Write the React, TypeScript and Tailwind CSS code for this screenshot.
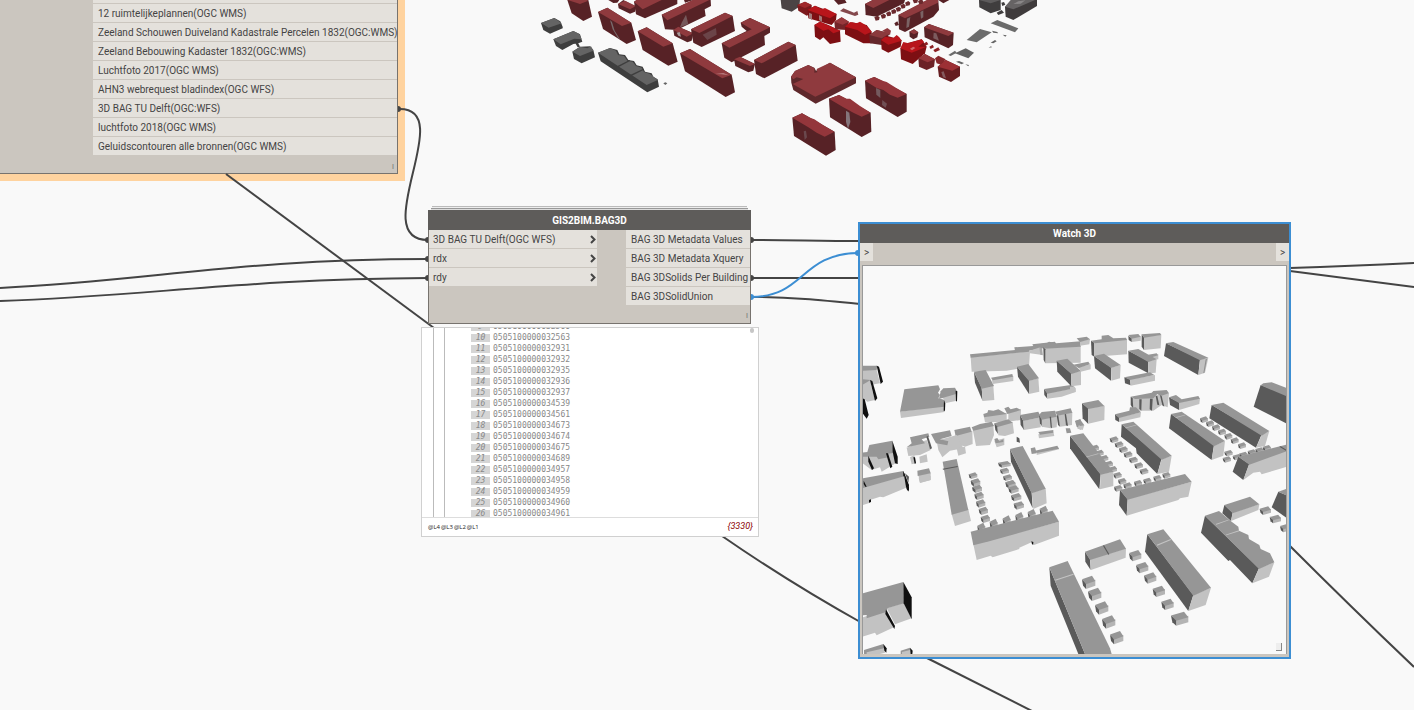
import React from "react";

type Shape = [string, string];
type Cube = [number, number, number, number];

const T = "#969696";
const L = "#c2c2c2";
const D = "#5a5a5a";
const K = "#101010";
const RT = "#8f3a3e";
const RD = "#572226";
const BT = "#b8151b";
const BD = "#7d0f13";
const GT = "#646464";
const GD = "#3e3e3e";

function Shapes({ x, y, items, cubes = [] }: { x: number; y: number; items: Shape[]; cubes?: Cube[] }) {
  return (
    <g transform={`translate(${x} ${y}) scale(0.33333)`}>
      {cubes.map(([cx, cy, w, h], i) => (
        <g key={`c${i}`}>
          <polygon fill="#b4b4b4" points={`${cx + w * 0.3},${cy + h * 0.5} ${cx + w},${cy + h * 0.3} ${cx + w},${cy + h * 0.75} ${cx + w * 0.3},${cy + h}`} />
          <polygon fill={D} points={`${cx},${cy + h * 0.3} ${cx + w * 0.3},${cy + h * 0.5} ${cx + w * 0.3},${cy + h} ${cx + w * 0.08},${cy + h * 0.75}`} />
          <polygon fill={T} points={`${cx},${cy + h * 0.27} ${cx + w * 0.75},${cy} ${cx + w},${cy + h * 0.4} ${cx + w * 0.3},${cy + h * 0.65}`} />
        </g>
      ))}
      {items.map(([fill, points], i) => (
        <polygon key={i} fill={fill} points={points} />
      ))}
    </g>
  );
}

const row = (pts: [number, number][], w: number, h: number): Cube[] => pts.map(([a, b]) => [a, b, w, h]);

const redWest: Shape[] = [
  [GD, "33,69 73,54 91,64 98,80 98,85 60,101 40,90"], [GT, "33,69 73,54 95,70 56,83"],
  [GD, "70,118 130,93 150,103 157,125 145,130 130,132 97,150 78,138"], [GT, "70,118 130,93 148,102 155,118 133,116 92,133"],
  [GD, "136,130 144,128 150,140 143,142"],
  [GD, "127,155 150,140 180,139 190,150 195,172 155,190 132,177"], [GT, "127,155 150,140 172,145 183,139 190,152 150,168"],
  [GD, "204,158 240,144 262,150 268,163 285,165 295,180 312,183 320,196 338,200 345,215 365,220 370,230 383,238 387,260 352,277 212,184"],
  [GT, "204,158 240,144 258,152 264,165 282,168 292,182 308,185 318,198 335,203 342,216 360,222 383,240 350,255"],
  [GD, "252,203 298,180 300,183 255,207"], [GD, "300,225 340,206 342,209 303,229"],
  [GT, "400,250 406,247 412,250 406,255"],
  [RD, "112,0 175,0 186,50 160,63 125,40"], [RT, "113,0 172,0 173,3 150,12"],
  [RD, "204,36 232,23 304,68 318,120 290,132 219,87"], [RT, "204,36 232,23 304,68 276,78"],
  ["#77696b", "240,60 246,66 254,92 270,118 264,114 248,88"],
  [RD, "323,94 350,82 428,130 443,185 415,197 338,150"], [RT, "323,94 350,82 428,130 400,140"],
  [RD, "450,160 480,147 605,224 615,277 587,291 465,214"], [RT, "450,160 480,147 605,224 577,235"],
  ["#b97f80", "555,222 580,219 597,226 575,223"],
  [RD, "235,0 268,0 262,8 250,9"], [RD, "264,12 280,0 318,20 315,35 300,41 266,25"], [RT, "264,12 285,2 318,18 300,28"],
  [RD, "312,5 320,0 442,0 442,12 345,55 318,43"], [RT, "312,5 320,0 395,0 338,28"],
  [RD, "462,0 490,0 465,8"],
  [RD, "395,44 490,0 542,0 543,18 524,28 527,48 440,90 405,88"], [RT, "395,44 488,0 538,0 412,61"],
  ["#76585b", "455,68 468,44 475,72 450,82"],
  [RD, "430,90 445,80 490,100 485,122 472,127 433,107"], [RT, "430,90 445,80 490,100 470,110"],
  ["#a49899", "440,98 449,96 453,110 445,107"],
  [RD, "483,88 585,38 608,48 615,93 515,141 490,128"], [RT, "483,88 585,38 608,48 508,99"],
  ["#6b4448", "518,104 558,84 560,104 532,120"],
  [RD, "632,68 660,54 720,82 720,98 703,108 705,135 605,187 583,173 575,130 650,93 635,80"],
  [RT, "632,68 660,54 720,82 598,143 575,130 665,88"],
  [RD, "612,178 630,170 675,192 670,212 655,217 616,198"], [RT, "612,178 630,170 675,192 660,198"],
  [RD, "672,180 775,125 797,135 803,182 703,235 678,222"], [RT, "672,180 775,125 797,135 695,190"],
  ["#4b4445", "752,0 810,0 808,20 785,35 755,25"],
];

const redEast: Shape[] = [
  ["#7c1a1d", "52,15 75,5 95,15 95,40 80,47 55,32"], ["#a0282b", "52,15 75,5 95,15 75,24"],
  [BD, "83,30 105,17 170,42 168,60 155,75 85,55"], [BT, "83,30 105,17 125,28 135,24 170,42 150,55"],
  ["#a3797a", "87,38 96,42 96,60 87,55"], ["#a3797a", "117,46 126,50 126,66 117,60"],
  [BD, "103,75 120,65 145,75 180,92 182,125 150,132 130,112 120,120 105,110"], [BT, "103,75 120,65 182,92 160,100 145,88 130,92"],
  ["#742529", "163,65 185,52 207,65 200,90 165,88"], ["#98383c", "163,65 185,52 207,65 188,74"],
  [BD, "195,80 215,67 260,75 275,95 275,130 250,130 195,103"], [BT, "195,80 210,66 230,70 240,65 258,76 275,95 255,104 232,90"],
  ["#65282c", "268,105 290,90 330,100 305,135 270,130"], ["#8b3a3d", "268,105 290,90 330,100 305,115"], [RT, "307,92 322,84 333,92 330,105"],
  [BD, "303,120 320,107 365,120 362,140 325,158 305,148"], [BT, "303,120 315,110 340,114 350,105 358,112 365,122 325,134"],
  [BD, "361,145 380,130 425,118 440,140 435,160 398,192 363,178"], [BT, "361,145 370,126 385,130 425,118 432,126 415,140 440,140 395,158"],
  ["#d06a6c", "390,146 400,140 406,144 396,151"],
  ["#8c2023", "432,130 440,125 445,133 435,138"], ["#8c2023", "448,140 458,134 462,142 452,147"], ["#8c2023", "460,150 475,142 480,150 465,157"],
  ["#6c2226", "415,175 435,162 465,178 462,200 440,210 417,200"], ["#97383c", "415,175 435,162 465,178 443,187"],
  ["#86282c", "465,175 475,167 497,178 485,195 470,190"],
  ["#651c20", "473,200 497,180 540,200 540,228 513,246 477,230"], ["#9c3035", "473,200 497,180 540,200 517,212"],
  ["#84595d", "484,216 491,214 498,235 489,232"],
  [RD, "388,95 402,88 415,97 412,112 400,118 389,110"], [RT, "388,95 402,88 415,97 402,103"],
  [RD, "432,82 447,72 521,98 519,135 505,145 434,112"], [RT, "432,82 447,72 521,98 505,108"],
  ["#7c5b5e", "461,98 469,100 477,122 460,115"],
  [RD, "355,45 445,0 475,0 477,30 460,50 375,96 357,88"], [RT, "355,45 440,0 474,0 474,8 375,55"],
  ["#7a6264", "381,56 391,51 387,80 379,84"], ["#7a6264", "421,36 430,31 430,52 423,56"],
  [RD, "255,12 278,0 375,0 372,10 290,50 257,45"], [RT, "255,12 278,0 328,0 280,24"],
  [RD, "162,0 195,0 200,8 175,14"], ["#84494d", "180,33 190,25 222,38 232,33 235,44 225,48"],
  [RD, "343,70 352,64 357,75 347,78"], [RD, "475,0 508,0 490,10"],
  ...([[283, 52], [302, 46], [318, 39], [333, 32], [347, 25], [361, 16], [375, 8], [398, 0], [414, 3]] as [number, number][]).map(
    ([a, b]): Shape => ["#6b292d", `${a},${b} ${a + 10},${b - 5} ${a + 16},${b} ${a + 14},${b + 8} ${a + 4},${b + 10}`]
  ),
  ["#3f3d3e", "597,0 662,0 662,30 632,40 598,22"], ["#5d5b5c", "597,0 662,0 632,10"], ["#3f3d3e", "650,38 665,30 672,38 655,45"], ["#3f3d3e", "664,8 672,6 676,14 667,18"],
  ["#3f3b3c", "675,20 700,0 771,0 771,18 700,60 677,50"], ["#666364", "675,20 692,0 765,0 700,28"], ["#8a8788", "700,12 715,4 736,1 722,11"],
  ["#6b6b6b", "632,70 652,60 715,85 705,97"], ["#6b6b6b", "560,120 600,87 635,97 590,127"], ["#626262", "525,160 557,145 582,158 565,175"],
  ["#6b6b6b", "505,165 525,152 530,158 512,168"], [GT, "636,92 652,96 654,100 640,98"], [GT, "668,104 680,106 676,110"],
  [GT, "632,128 645,120 650,124 640,130"], [GT, "626,143 633,139 636,142"], [GT, "528,185 537,183 552,189 545,193"], [GT, "556,193 567,195 565,199"],
  ["#5e282b", "33,230 45,213 85,195 103,203 108,212 150,188 228,232 228,250 107,311 40,270 34,248"],
  [RT, "33,230 45,213 85,195 103,205 103,218 112,217 110,207 150,188 228,232 106,290 38,252 70,237 50,232 40,238"],
  [RD, "255,242 283,231 380,282 380,335 353,351 258,295"], ["#94363b", "255,242 272,235 283,231 310,243 320,246 345,262 380,282 353,293 330,284 310,270 290,264"],
  ["#745a5e", "288,264 301,270 301,294 289,284"], ["#704f54", "307,300 321,311 317,323 306,315"],
  [RD, "147,296 177,285 272,338 274,395 245,411 150,352"], ["#94363b", "147,296 177,285 200,296 210,296 240,318 272,338 245,350 220,338 190,322"],
  ["#84747a", "198,332 208,338 211,366 204,386 198,366"],
  [RD, "37,353 66,340 164,395 167,450 138,467 42,408"], ["#94363b", "37,353 66,340 92,354 103,358 130,376 163,395 134,410 110,398 85,382"],
  ["#6a484d", "71,394 78,392 81,412 74,420"],
];

const northWest: Shape[] = [
  [L, "8,150 50,150 60,190 30,195 8,190"], [T, "8,137 52,137 50,150 8,152"], [K, "50,137 57,140 69,185 62,192"],
  [L, "8,185 30,185 45,240 22,245 8,235"], [T, "8,178 32,180 8,194"], [K, "30,180 37,183 52,235 45,243"], [K, "8,235 14,238 26,285 20,296 8,280"],
  [L, "120,275 254,256 254,276 123,294"], [T, "133,208 235,196 240,208 234,218 240,225 235,235 255,240 252,260 120,275"], [K, "252,240 256,245 255,272 251,272"],
  [L, "240,228 290,218 290,242 255,250 252,238"], [T, "242,214 250,205 285,203 290,212 288,222 237,237"], [K, "287,212 292,214 291,245 288,242"],
  [L, "332,112 510,94 507,140 440,152 335,155"], [T, "463,82 520,78 517,73 585,65 590,76 500,94 465,92"], [T, "330,103 505,86 508,95 332,113"],
  [L, "507,93 545,80 548,105 510,100"], ["#a8a8a8", "538,82 546,80 548,106 541,104"],
  [L, "554,85 662,78 662,128 556,130"], [T, "517,75 560,70 567,65 585,68 588,70 662,64 662,80 552,86"], [D, "550,82 556,88 556,130 551,120"],
  [D, "342,155 365,203 368,243 345,188"], [L, "365,203 400,197 403,240 368,243"], [T, "342,155 377,150 402,198 365,206"],
  [L, "396,179 460,168 460,183 398,192"], [T, "393,173 457,162 459,170 398,181"],
  [D, "471,140 507,180 507,222 474,170"], [L, "507,182 535,175 538,215 507,222"], [T, "471,140 505,132 537,175 507,183"],
  [D, "552,207 562,219 562,236 553,225"], [L, "562,219 647,204 647,216 605,230 562,236"], [T, "552,207 637,194 645,205 562,221"],
  [L, "372,290 440,278 440,305 375,307"], [T, "370,282 382,278 385,270 400,272 415,268 440,282 372,292"],
  [L, "445,275 483,268 482,300 445,305"], [T, "433,265 445,260 452,268 470,263 483,270 442,282"],
  [L, "412,318 458,306 462,340 435,348 415,346"], [T, "403,310 445,298 458,308 410,322"], [D, "403,310 412,320 414,342 406,330"],
  [D, "480,285 490,302 492,330 482,315"], [L, "490,302 543,292 542,322 492,330"], [T, "480,285 535,275 543,292 490,303"],
  [D, "537,285 546,297 548,322 540,310"], [L, "545,297 592,288 590,322 572,325 545,320"], [T, "537,285 545,276 585,272 590,290 545,299"], [D, "569,290 573,290 576,325 572,322"],
  [L, "592,285 637,276 636,315 600,320"], [T, "585,275 632,265 637,278 592,287"], [D, "590,285 595,287 600,320 594,315"], [D, "614,283 618,282 624,318 618,316"],
  [L, "535,343 580,335 583,348 537,355"], [T, "535,336 580,330 580,338 540,344"], [T, "617,325 630,325 634,338 620,340"],
  [L, "403,362 433,355 433,375 410,382"], [T, "403,357 412,354 418,364 430,358 430,366 407,370"], [D, "470,350 478,355 480,368 470,365"],
  [T, "512,385 525,382 530,400 515,402"], [L, "530,396 597,383 597,388 530,405"], [T, "525,392 592,377 597,386 530,399"],
  [L, "338,328 400,315 402,345 390,375 348,378"], [T, "335,322 360,312 395,305 402,318 340,332"],
  [L, "287,342 337,333 338,372 315,380 287,370"], [T, "283,330 330,320 335,335 287,348"],
  [L, "230,362 290,345 310,385 270,392 247,412 235,390"], [T, "213,342 270,331 275,348 240,358 265,364 262,376 228,370"], [L, "290,385 315,380 318,400 295,407"],
  [L, "140,383 200,360 212,390 180,405 145,408"], [T, "150,352 205,340 208,350 185,358 195,370 140,382 155,370"], [D, "199,350 204,348 216,385 210,388"],
  [L, "150,412 163,405 168,430 155,433"], [K, "160,412 165,412 168,430 164,431"], [L, "178,410 200,403 203,425 180,430"],
  [L, "175,465 212,458 212,480 180,488"], [T, "172,452 207,445 212,460 173,468"],
  [L, "8,405 40,402 100,400 107,430 65,455 60,442 35,450 8,430"], [T, "28,375 97,362 100,400 80,402 85,412 55,418 50,410 8,410 8,398 22,396"],
  [K, "97,362 113,410 113,432 105,430 98,395"], [K, "25,407 42,445 36,450 25,425"], [K, "78,400 84,400 97,440 91,445"],
  [T, "8,475 130,453 140,480 20,504 8,507"], [K, "130,453 147,500 147,512 141,510 130,472"], [D, "135,460 147,470 145,488"],
  [T, "645,303 662,298 662,330 650,320"],
  [D, "590,122 634,160 634,199 592,155"], [L, "634,160 663,152 663,195 634,199"], [T, "590,122 622,116 663,153 634,162"],
];
const northWestCubes: Cube[] = [
  ...row([[326, 457], [332, 477], [336, 496]], 26, 20),
  [414, 423, 38, 20], ...row([[420, 443], [429, 463], [437, 481]], 27, 20),
];

const northEast: Shape[] = [
  [L, "30,63 60,57 58,73 30,77"], [T, "20,55 50,50 60,58 30,66"],
  [D, "63,62 73,68 73,110 65,105"], [L, "73,67 171,58 171,103 73,110"], [T, "63,62 95,58 95,47 115,45 130,55 168,53 171,60 75,70"],
  [L, "185,53 213,49 212,62 185,66"], [D, "175,47 185,55 185,66 176,60"], [T, "175,45 205,42 212,50 185,56"],
  [D, "215,43 222,52 222,90 215,80"], [L, "222,50 274,44 272,85 222,90"], [T, "215,43 270,39 274,45 222,53"],
  [D, "72,108 123,142 123,182 75,145"], [L, "123,143 152,135 150,175 124,182"], [T, "72,108 102,101 152,135 123,144"],
  [L, "235,105 265,103 265,118 245,120"], [T, "235,104 260,100 264,106 245,112"],
  [D, "175,92 235,123 235,160 176,128"], [L, "235,124 260,118 257,158 238,160"], [T, "175,92 205,87 260,118 235,126"],
  [D, "163,172 180,178 182,196 165,190"], [L, "180,178 255,165 255,182 182,197"], [T, "163,172 240,157 253,165 180,180"],
  [D, "288,70 390,118 385,165 282,108"], [L, "390,119 415,113 405,158 385,165"], [T, "287,70 310,66 415,113 390,121"], ["#8e8e8e", "407,118 411,116 403,158 400,160"],
  [L, "26,142 62,133 62,148 32,155"], [T, "10,134 55,125 60,133 26,144"], [L, "0,200 15,200 17,215 0,220"],
  [D, "572,195 652,225 652,312 551,260"], [T, "572,196 580,190 605,187 652,205 652,230"],
  [D, "36,250 55,265 55,312 38,295"], [L, "55,265 104,257 103,300 55,311"], [T, "36,250 85,240 103,258 55,267"],
  [L, "28,312 43,316 38,330 22,326"], [T, "15,303 30,298 43,316 30,318"],
  [L, "185,235 297,220 293,262 275,255 250,272 210,272 190,265"], [T, "182,230 245,218 250,213 290,210 297,220 272,228 262,222 250,235 195,237"],
  [D, "182,230 188,234 190,268 182,255"], [D, "208,238 215,238 214,272 208,266"], [D, "240,236 248,236 246,272 239,268"], [D, "257,228 262,228 268,256 262,254"], [D, "270,226 275,228 283,260 277,256"],
  [D, "135,283 147,292 147,306 136,300"], [L, "147,292 213,277 211,292 147,306"], [T, "135,283 178,272 180,262 198,262 213,277 147,294"],
  [D, "297,232 327,247 327,270 300,255"], [L, "327,247 390,235 388,252 327,270"], [T, "297,232 318,225 335,238 385,228 390,236 327,249"],
  [D, "425,255 575,343 558,383 418,295"], [L, "575,345 598,333 585,378 558,383"], [T, "425,255 460,248 598,333 575,347"],
  [D, "303,282 432,375 425,420 297,325"], [L, "432,377 465,363 460,407 425,420"], [T, "303,282 335,275 465,363 432,379"], ["#bcbcbc", "316,292 345,284 346,286 318,294"],
  [D, "155,313 275,415 262,462 200,400 198,385 153,350"], [L, "275,417 305,407 297,455 262,462"], [T, "155,313 190,305 305,407 275,419"], ["#bcbcbc", "165,323 198,314 200,316 167,325"],
  [D, "0,347 92,462 88,508 0,385"], [L, "92,462 130,455 130,498 90,508"], [T, "0,347 40,340 130,455 92,464"], ["#bcbcbc", "48,410 85,400 86,402 50,412"],
  [D, "505,410 538,432 520,480 488,455"], [L, "538,430 652,391 652,440 575,463 570,455 550,458 520,480"], [T, "505,410 652,373 652,393 538,434"], [D, "628,380 632,379 650,390 648,392"],
];
const northEastCubes: Cube[] = [
  ...row([[390, 289], [408, 301], [426, 313], [444, 326], [463, 339], [482, 352], [504, 367]], 24, 20),
  ...row([[119, 349], [134, 364], [147, 379], [161, 394], [177, 410], [193, 427], [209, 444]], 26, 20),
  ...row([[62, 374], [76, 389], [90, 405], [104, 422], [116, 438], [130, 456], [144, 474], [160, 487], [132, 495]], 25, 20),
  ...row([[463, 390], [458, 409], [488, 402], [508, 395], [533, 388], [556, 382], [578, 375]], 25, 19),
  ...row([[192, 480], [220, 473], [250, 465], [277, 456]], 24, 20),
];

const southWest: Shape[] = [
  [L, "8,24 135,-12 146,20 70,52 60,50 30,60 30,68 8,75"], [K, "130,-27 147,15 145,35 138,20"], [K, "27,60 33,58 33,66 27,68"], [K, "11,2 20,20 16,20 11,12"],
  [L, "176,-5 212,-12 212,0 180,9"],
  [L, "275,102 325,88 333,123 285,138"], [T, "248,-55 290,-63 325,90 275,104"], [D, "248,-34 293,-42 293,-39 249,-31"],
  [D, "450,-93 515,38 518,85 453,-55"], [L, "515,38 557,25 560,70 520,87"], [T, "450,-93 488,-102 557,26 515,40"],
  [L, "340,193 597,125 597,167 522,195 518,185 478,203 478,207 398,232 392,227 350,240"], [T, "332,155 578,92 597,125 388,184 340,196"], [K, "514,184 520,186 520,194 516,193"],
  [L, "8,412 75,390 105,440 50,466 45,458 8,470"], [L, "80,385 132,368 155,415 105,433"], [T, "8,340 130,306 132,370 82,385 78,396 20,415 20,405 8,406"],
  [K, "130,306 155,352 155,418 131,370"], [K, "78,388 105,438 103,447 76,402"],
  [T, "12,510 70,492 76,505 20,522 12,522"], [L, "20,517 72,505 75,518 60,522 20,522"], [K, "70,492 80,505 79,518 73,512"],
  [T, "122,512 150,503 152,522 122,522"], [L, "126,516 150,510 152,522 126,522"], [K, "150,503 158,512 157,522 152,522"],
  [D, "568,262 675,522 655,522 572,317"], [T, "568,262 623,243 750,505 755,522 675,522"], ["#c4c4c4", "585,299 640,281 641,284 586,302"],
];
const southWestCubes: Cube[] = [
  ...row([[333, -5], [338, 14], [343, 35], [348, 58], [356, 80], [362, 104]], 28, 25),
  ...row([[352, 128], [389, 116], [428, 106], [466, 96], [503, 87], [539, 77]], 24, 34),
  ...row([[436, 0], [445, 16], [453, 39], [461, 64]], 31, 25),
];

const southEast: Shape[] = [
  [D, "150,30 173,57 170,107 147,75"], [L, "173,57 365,5 355,50 330,55 325,60 170,107"], [T, "150,30 345,-18 365,5 173,59"],
  [D, "45,215 60,238 62,270 46,245"], [L, "60,238 168,205 167,233 63,270"], [T, "45,215 150,178 168,206 60,240"], [D, "99,197 102,196 118,223 115,224"],
  [D, "232,163 370,345 355,393 225,215"], [L, "370,345 423,323 407,375 355,393"], [T, "232,163 280,148 423,323 370,347"], ["#c4c4c4", "260,194 302,177 303,180 262,197"],
  [D, "463,75 488,98 483,123 457,100"], [L, "488,98 568,72 565,90 483,123"], [T, "463,75 540,50 568,73 488,100"],
  [D, "405,107 567,265 547,310 480,240 475,243 393,158"], [L, "567,265 613,247 597,290 547,310"],
  [T, "405,107 447,93 485,125 505,140 507,152 535,165 537,177 568,195 572,207 600,220 613,247 567,267"], ["#c4c4c4", "437,132 475,119 476,121 439,134"], ["#c4c4c4", "467,164 507,151 508,154 469,166"],
  [D, "625,35 652,47 652,115 605,82"], [T, "625,35 652,26 652,48"],
];
const southEastCubes: Cube[] = [
  ...row([[36, 287], [54, 323], [75, 364], [96, 406], [120, 453]], 40, 40),
  ...row([[177, 210], [198, 246], [222, 277], [248, 317], [274, 356]], 37, 34),
  [303, 395, 52, 42],
  ...row([[569, 79], [599, 104], [630, 131]], 34, 26),
];

const services = [
  "12 ruimtelijkeplannen(OGC WMS)",
  "Zeeland Schouwen Duiveland Kadastrale Percelen 1832(OGC:WMS)",
  "Zeeland Bebouwing Kadaster 1832(OGC:WMS)",
  "Luchtfoto 2017(OGC WMS)",
  "AHN3 webrequest bladindex(OGC WFS)",
  "3D BAG TU Delft(OGC:WFS)",
  "luchtfoto 2018(OGC WMS)",
  "Geluidscontouren alle bronnen(OGC WMS)",
];
const inputs = ["3D BAG TU Delft(OGC WFS)", "rdx", "rdy"];
const outputs = ["BAG 3D Metadata Values", "BAG 3D Metadata Xquery", "BAG 3DSolids Per Building", "BAG 3DSolidUnion"];
const levels = ["@L4", "@L3", "@L2", "@L1"];
const ids = [
  "32560", "32563", "32931", "32932", "32935", "32936", "32937", "34539", "34561",
  "34673", "34674", "34675", "34689", "34957", "34958", "34959", "34960", "34961",
];

function Port({ children }: { children: React.ReactNode }) {
  return <li className="flex h-[18px] items-center whitespace-nowrap bg-[#e4e1dc] pl-[5px]">{children}</li>;
}

function Wires() {
  return (
    <svg className="pointer-events-none absolute left-0 top-0 h-[710px] w-[1414px] overflow-visible" fill="none" stroke="#444" strokeWidth="2" aria-hidden="true">
      <path d="M0 288 C150 281 240 259 428 259" />
      <path d="M0 301 C150 296 240 279 428 278" />
      <path d="M226 174 L434 328" />
      <path d="M722 536 Q790 583 862 623" />
      <path d="M925 657 Q978 684 1032 711" />
      <path d="M751 240 C790 240 820 241 860 241" />
      <path d="M751 278 H860" />
      <path d="M751 297 C790 297 820 300 860 304" />
      <path d="M1290 268 Q1350 266 1414 263" />
      <path d="M1290 271 Q1350 279 1414 287" />
      <path d="M1290 546 Q1350 606 1414 667" />
      <path stroke="#3c8ed3" d="M751 297 C805 297 800 254 858 253" />
    </svg>
  );
}

function PortDots() {
  return (
    <svg className="pointer-events-none absolute left-0 top-0 h-[710px] w-[1414px] overflow-visible" fill="none" aria-hidden="true">
      <path stroke="#444" strokeWidth="2" d="M400 109 C458 109 366 240 428 240" />
      <g fill="#444">
        <path d="M398 106 a3 3 0 0 1 0 6z M428 237 a3 3 0 0 0 0 6z M428 256 a3 3 0 0 0 0 6z M428 275 a3 3 0 0 0 0 6z" />
        <path d="M751 237 a3 3 0 0 1 0 6z M751 275 a3 3 0 0 1 0 6z" />
      </g>
      <path fill="#3c8ed3" d="M751 294 a3 3 0 0 1 0 6z M858 250 a3 3 0 0 0 0 6z" />
    </svg>
  );
}

export default function App() {
  return (
    <main className="relative min-h-screen overflow-hidden bg-[#f9f9f9] text-[10px] text-[#444] [font-family:Roboto,'Open_Sans',sans-serif]">
      <svg className="absolute left-0 top-0 h-[710px] w-[1414px]" role="img" aria-label="3D city background">
        <Shapes x={530} y={0} items={redWest} />
        <Shapes x={780} y={0} items={redEast} />
      </svg>

      <section className="absolute left-0 top-0 border-b-[7px] border-r-[7px] border-[#ffd39f]">
        <div className="flex w-[398px] flex-col border-b border-r border-[#77736e] bg-[#cbc6bf]">
          <ul className="ml-[93px] flex flex-col gap-px">
            <li className="h-[3px] bg-[#e4e1dc]" />
            {services.map((s) => (
              <Port key={s}>{s}</Port>
            ))}
          </ul>
          <span className="flex h-[18px] items-center justify-end pr-[3px] pt-[6px] text-[8px] text-[#777]">l</span>
        </div>
      </section>
      <Wires />

      <section className="absolute left-[428px] top-[206px] w-[323px]">
        <div className="mx-[4px] h-[2px] border-t border-[#bbb] bg-[#eee]" />
        <div className="mx-[3px] h-[2px] border-t border-[#999] bg-[#ddd]" />
        <h2 className="flex h-[20px] items-center justify-center bg-[#5e5c5a] font-bold text-white">GIS2BIM.BAG3D</h2>
        <div className="border border-t-0 border-[#77736e] bg-[#cbc6bf]">
          <div className="flex items-start justify-between">
            <ul className="flex w-[168px] flex-col gap-px">
              {inputs.map((s) => (
                <Port key={s}>
                  <span className="flex-1 -ml-px">{s}</span>
                  <svg className="mr-px h-[9px] w-[6px]" viewBox="0 0 6 9" fill="none" stroke="#444" strokeWidth="2" aria-hidden="true">
                    <path d="M1 1 L4.5 4.5 L1 8" />
                  </svg>
                </Port>
              ))}
            </ul>
            <ul className="flex w-[124px] flex-col gap-px">
              {outputs.map((s) => (
                <Port key={s}>{s}</Port>
              ))}
            </ul>
          </div>
          <span className="flex h-[18px] items-center justify-end pr-[2px] pt-[3px] text-[8px] text-[#777]">l</span>
        </div>
      </section>

      <section className="absolute left-[421px] top-[327px] w-[338px] border border-[#d0d0d0] bg-white">
        <div className="relative flex h-[189px] overflow-hidden pl-[11px]">
          <div className="w-[12px] border-l border-r border-[#bbb]" />
          <ol className="-mt-[7px] ml-[26px] text-[8px] text-[#888] [font-family:'DejaVu_Sans_Mono',monospace]">
            {ids.map((id, i) => (
              <li key={id} className="flex h-[11px] items-center gap-[3px]">
                <span className="flex h-[8px] w-[19px] items-center justify-center bg-[#d5d5d5] italic">{i + 9}</span>
                <span>05051000000{id}</span>
              </li>
            ))}
          </ol>
          <span className="absolute right-[4px] top-0 h-[5px] w-[4px] rounded-full bg-[#c6c6c6]" />
        </div>
        <footer className="flex h-[19px] items-center justify-between border-t border-[#ddd] pl-[6px] pr-[5px]">
          <span className="flex gap-px text-[6px] text-[#222] [font-family:'Open_Sans',sans-serif]">
            {levels.map((l) => (
              <span key={l}>{l}</span>
            ))}
          </span>
          <span className="text-[9px] italic text-[#8b0000]">{"{3330}"}</span>
        </footer>
      </section>

      <section className="absolute left-[858px] top-[222px] w-[433px] border-2 border-[#3c8ed3] bg-[#cbc6bf]">
        <h2 className="flex h-[19px] items-center justify-center bg-[#5e5c5a] font-bold text-white">Watch 3D</h2>
        <div className="flex h-[18px] justify-between">
          <span className="flex w-[13px] items-center justify-center bg-[#e4e1dc]">&gt;</span>
          <span className="flex w-[13px] items-center justify-center bg-[#e4e1dc]">&gt;</span>
        </div>
        <div className="mx-[2px] mb-[3px] mt-[4px] border border-b-0 border-[#999] bg-[#f9f9f9]">
          <svg className="block h-[388px] w-full" viewBox="863 266 423 388" preserveAspectRatio="xMinYMin slice" role="img" aria-label="3D building view">
            <Shapes x={860} y={320} items={northWest} cubes={northWestCubes} />
            <Shapes x={1070} y={320} items={northEast} cubes={northEastCubes} />
            <Shapes x={860} y={480} items={southWest} cubes={southWestCubes} />
            <Shapes x={1070} y={480} items={southEast} cubes={southEastCubes} />
            <path fill="#eee" d="M1276 643h6v7h-6z" />
            <path fill="#888" d="M1281 643h1v8h-6v-1h5z" />
          </svg>
        </div>
      </section>
      <PortDots />
    </main>
  );
}
